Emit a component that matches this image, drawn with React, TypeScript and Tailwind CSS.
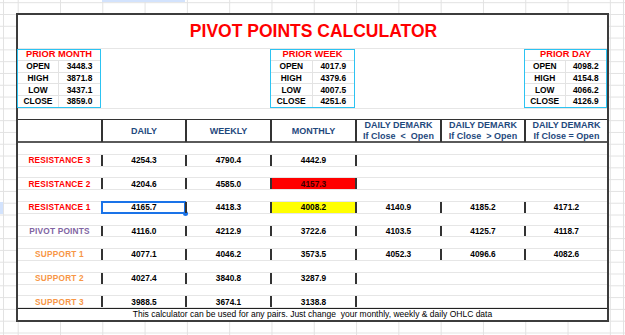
import React from "react";

type Level = {
  label: string;
  color: string;
  vals: string[];
  dm?: string[];
  hl?: "red" | "yellow";
  sel?: boolean;
};

const levels: Level[] = [
  { label: "RESISTANCE 3", color: "text-[#ff0000]", vals: ["4254.3", "4790.4", "4442.9"] },
  { label: "RESISTANCE 2", color: "text-[#ff0000]", vals: ["4204.6", "4585.0", "4157.3"], hl: "red" },
  {
    label: "RESISTANCE 1",
    color: "text-[#ff0000]",
    vals: ["4165.7", "4418.3", "4008.2"],
    dm: ["4140.9", "4185.2", "4171.2"],
    hl: "yellow",
    sel: true,
  },
  {
    label: "PIVOT POINTS",
    color: "text-[#8064a2]",
    vals: ["4116.0", "4212.9", "3722.6"],
    dm: ["4103.5", "4125.7", "4118.7"],
  },
  {
    label: "SUPPORT 1",
    color: "text-[#f79646]",
    vals: ["4077.1", "4046.2", "3573.5"],
    dm: ["4052.3", "4096.6", "4082.6"],
  },
  { label: "SUPPORT 2", color: "text-[#f79646]", vals: ["4027.4", "3840.8", "3287.9"] },
  { label: "SUPPORT 3", color: "text-[#f79646]", vals: ["3988.5", "3674.1", "3138.8"] },
];

const COLS = "grid grid-cols-[83px_84px_85px_85px_85px_84px_83px]";

const PriorBox = ({ title, rows }: { title: string; rows: [string, string][] }) => (
  <div className="border border-[#2cc3f2] h-full flex flex-col">
    <div className="h-[11.8px] border-b border-[#e3e3e3] flex items-center justify-center text-[9.3px] font-bold text-[#ff0000] leading-none">
      {title}
    </div>
    {rows.map(([k, v], i) => (
      <div
        key={k}
        className={`flex-1 grid grid-cols-2 text-[8.4px] font-bold text-black leading-none ${
          i < rows.length - 1 ? "border-b border-[#e3e3e3]" : ""}`}
      >
        <div className="flex items-center justify-center border-r border-[#e3e3e3]">{k}</div>
        <div className="flex items-center justify-center">{v}</div>
      </div>
    ))}
  </div>
);

const Spacer = () => <div className="h-[11.8px] border-b border-[#e6e6e6]" />;

const DataRow = ({ lv }: { lv: Level }) => {
  const extra = lv.dm ?? ["", "", ""];
  return (
    <div className={`${COLS} h-[11.8px] border-b border-[#e6e6e6] text-[8.3px] font-bold leading-none`}>
      <div className={`flex items-center justify-center tracking-[0.2px] ${lv.color}`}>{lv.label}</div>
      {lv.vals.map((v, i) => {
        const bg =
          i === 2 && lv.hl === "red" ? "bg-[#ff0000] text-[#3a0000]" : i === 2 && lv.hl === "yellow" ? "bg-[#ffff00]" : "";
        const selected = i === 0 && lv.sel;
        return (
          <div
            key={i}
            className={`relative flex items-center justify-center border-l-2 border-l-[#333] ${bg}`}
          >
            {v}
            {selected && (
              <>
                <span className="absolute -left-[2px] -top-[1px] -right-[1px] -bottom-[1px] border-2 border-[#1a73e8]" />
                <span className="absolute -right-[3px] -bottom-[3px] w-[5px] h-[5px] rounded-full bg-[#1a73e8]" />
              </>
            )}
          </div>
        );
      })}
      <div className="flex items-center justify-center border-l-2 border-l-[#333]">{extra[0]}</div>
      <div className={`flex items-center justify-center ${lv.dm ? "border-l-2 border-l-[#333]" : ""}`}>{extra[1]}</div>
      <div className={`flex items-center justify-center ${lv.dm ? "border-l-2 border-l-[#333]" : ""}`}>{extra[2]}</div>
    </div>
  );
};

export default function App() {
  return (
    <div className="relative w-[625px] h-[335px] overflow-hidden bg-white font-['Liberation_Sans',Arial,sans-serif] bg-[linear-gradient(to_right,#e2e2e2_1px,transparent_1px),linear-gradient(to_bottom,#e2e2e2_1px,transparent_1px)] [background-size:42.3px_11.8px] [background-position:17.7px_2.2px] pt-[13px] pl-[16px]">
      {/* spreadsheet chrome */}
      <div className="absolute left-[102px] top-0 w-[83px] h-[2px] bg-[#d3e3fd]" />
      <div className="absolute left-0 top-[202px] w-[3px] h-[12px] bg-[#d3e3fd]" />
      <div className="absolute left-[3px] top-0 w-px h-full bg-[#e2e2e2]" />
      <div className="absolute left-[623px] top-0 w-px h-full bg-[#e2e2e2]" />

      <div className="w-[593px] h-[309px] border-2 border-[#3c3c3c] bg-white flex flex-col">
        <div className="h-[33.6px] border-b border-[#e6e6e6] flex items-center justify-center text-[17.5px] font-bold text-[#ff0000] leading-none pl-[2px]">
          PIVOT POINTS CALCULATOR
        </div>

        <div className={`${COLS} h-[59px]`}>
          <div className="-ml-px">
            <PriorBox
              title="PRIOR MONTH"
              rows={[["OPEN", "3448.3"], ["HIGH", "3871.8"], ["LOW", "3437.1"], ["CLOSE", "3859.0"]]}
            />
          </div>
          <div />
          <div />
          <div>
            <PriorBox
              title="PRIOR WEEK"
              rows={[["OPEN", "4017.9"], ["HIGH", "4379.6"], ["LOW", "4007.5"], ["CLOSE", "4251.6"]]}
            />
          </div>
          <div />
          <div />
          <div>
            <PriorBox
              title="PRIOR DAY"
              rows={[["OPEN", "4098.2"], ["HIGH", "4154.8"], ["LOW", "4066.2"], ["CLOSE", "4126.9"]]}
            />
          </div>
        </div>

        <div className="h-[11.8px] border-t border-[#e6e6e6]" />

        <div className={`${COLS} h-[23.6px] border-t border-[#333] border-b-2 border-b-[#5a5a5a] text-[9px] font-bold text-[#1f497d] leading-[11px]`}>
          <div />
          <div className="flex items-center justify-center border-l-2 border-l-[#333]">DAILY</div>
          <div className="flex items-center justify-center border-l-2 border-l-[#333]">WEEKLY</div>
          <div className="flex items-center justify-center border-l-2 border-l-[#333]">MONTHLY</div>
          <div className="flex flex-col items-center justify-center border-l-2 border-l-[#333] whitespace-pre">
            <span>DAILY DEMARK</span>
            <span>{"If Close  <  Open"}</span>
          </div>
          <div className="flex flex-col items-center justify-center border-l-2 border-l-[#333] whitespace-pre">
            <span>DAILY DEMARK</span>
            <span>{"If Close  > Open"}</span>
          </div>
          <div className="flex flex-col items-center justify-center border-l-2 border-l-[#333] whitespace-pre">
            <span>DAILY DEMARK</span>
            <span>{"If Close = Open"}</span>
          </div>
        </div>

        {levels.map((lv) => (
          <React.Fragment key={lv.label}>
            <Spacer />
            <DataRow lv={lv} />
          </React.Fragment>
        ))}

        <div className="flex-1 border-t border-[#222] flex items-center justify-center text-[8.5px] text-black leading-none whitespace-pre">
          {"This calculator can be used for any pairs. Just change  your monthly, weekly & daily OHLC data"}
        </div>
      </div>
    </div>
  );
}
